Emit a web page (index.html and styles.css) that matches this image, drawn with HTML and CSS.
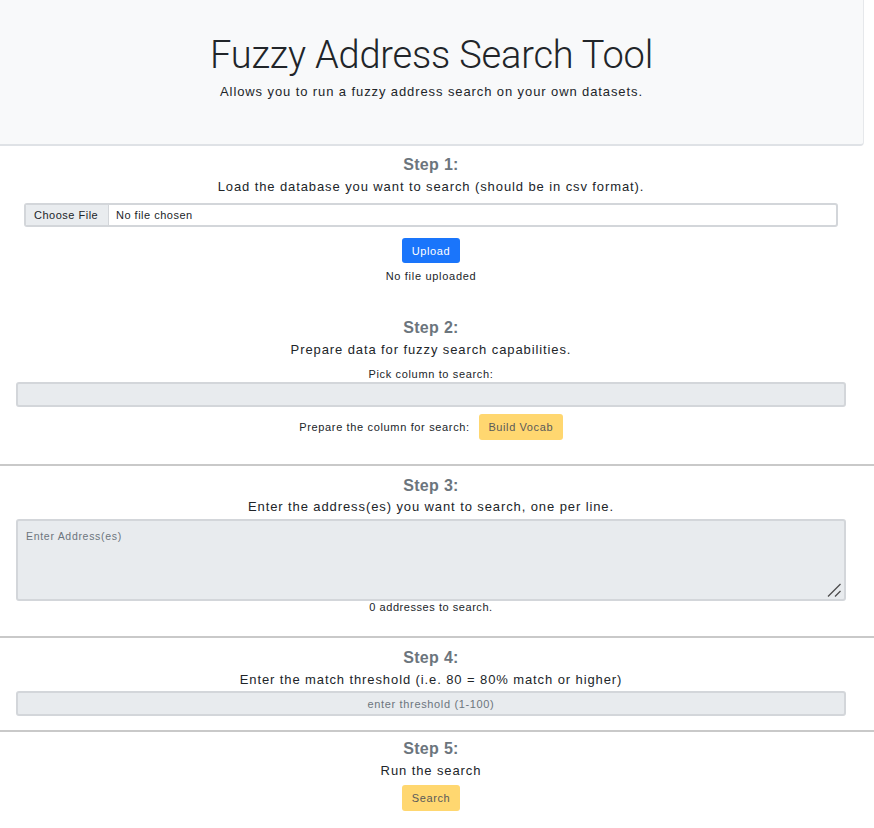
FILE: index.html
```html
<!DOCTYPE html>
<html>
<head>
<meta charset="utf-8">
<link rel="stylesheet" href="styles.css">
</head>
<body>
<header class="jumbotron">
  <h1 class="title">Fuzzy Address Search Tool</h1>
  <p class="lead">Allows you to run a fuzzy address search on your own datasets.</p>
</header>

<section class="step step1">
  <h2 class="step-title">Step 1:</h2>
  <p class="step-desc">Load the database you want to search (should be in csv format).</p>
  <div class="file-input">
    <span class="file-btn">Choose File</span>
    <span class="file-name">No file chosen</span>
  </div>
  <button class="btn btn-primary upload">Upload</button>
  <p class="small-note">No file uploaded</p>
</section>

<section class="step step2">
  <h2 class="step-title">Step 2:</h2>
  <p class="step-desc">Prepare data for fuzzy search capabilities.</p>
  <p class="small-label">Pick column to search:</p>
  <div class="field select-field"></div>
  <div class="vocab-row">
    <span class="small-text">Prepare the column for search:</span>
    <button class="btn btn-warning vocab">Build Vocab</button>
  </div>
</section>

<hr class="divider">

<section class="step step3">
  <h2 class="step-title">Step 3:</h2>
  <p class="step-desc">Enter the address(es) you want to search, one per line.</p>
  <div class="field textarea-field">
    <span class="placeholder">Enter Address(es)</span>
    <svg class="grip" width="14" height="14" viewBox="0 0 14 14">
      <line x1="1" y1="13.5" x2="13.5" y2="1" stroke="#4a4a4a" stroke-width="1.2"/>
      <line x1="8" y1="13.5" x2="13.5" y2="8" stroke="#4a4a4a" stroke-width="1.2"/>
    </svg>
  </div>
  <p class="count-note">0 addresses to search.</p>
</section>

<hr class="divider">

<section class="step step4">
  <h2 class="step-title">Step 4:</h2>
  <p class="step-desc">Enter the match threshold (i.e. 80 = 80% match or higher)</p>
  <div class="field threshold-field"><span class="placeholder">enter threshold (1-100)</span></div>
</section>

<hr class="divider">

<section class="step step5">
  <h2 class="step-title">Step 5:</h2>
  <p class="step-desc">Run the search</p>
  <button class="btn btn-warning search">Search</button>
</section>
</body>
</html>
```
FILE: styles.css
```css
* { box-sizing: border-box; }
body {
  margin: 0;
  font-family: "Liberation Sans", Arial, sans-serif;
  color: #212529;
  background: #fff;
  width: 874px;
}
p, h1, h2 { margin: 0; }

.jumbotron {
  width: 864px;
  height: 146px;
  background: #f8f9fa;
  border-bottom: 2px solid #dfe2e6;
  border-right: 1px solid #e6e8eb;
  border-radius: 0 0 4px 0;
  display: flex;
  flex-direction: column;
  align-items: center;
  padding-top: 32px;
}
.title {
  font-family: Roboto, "Liberation Sans", sans-serif;
  font-weight: 300;
  font-size: 38px;
  line-height: 46px;
  color: #212529;
  letter-spacing: -0.2px;
}
.lead {
  font-size: 13px;
  line-height: 18px;
  margin-top: 5px;
  letter-spacing: 0.9px;
  color: #212529;
}

.step {
  width: 862px;
  display: flex;
  flex-direction: column;
  align-items: center;
}
.step-title {
  font-size: 16px;
  line-height: 20px;
  font-weight: bold;
  color: #6c757d;
  letter-spacing: 0.3px;
}
.step-desc {
  font-size: 13px;
  line-height: 18px;
  margin-top: 3px;
  letter-spacing: 0.9px;
}
.step1 { padding-top: 9px; }
.step2 { padding-top: 35px; }
.step3 { padding-top: 10px; }
.step4 { padding-top: 10px; }
.step5 { padding-top: 7px; }
.step3 .step-desc { margin-top: 2px; }

.file-input {
  margin-top: 7px;
  width: 814px;
  height: 24px;
  border: 2px solid #d3d6da;
  border-radius: 3px;
  display: flex;
  align-items: stretch;
  font-size: 11px;
  letter-spacing: 0.5px;
  overflow: hidden;
  background: #fff;
}
.file-btn {
  background: #e9ecef;
  border-right: 1px solid #d3d6da;
  padding: 0 0 0 8px;
  display: flex;
  align-items: center;
  width: 83px;
}
.file-name {
  display: flex;
  align-items: center;
  padding-left: 7px;
}

.btn {
  border: 0;
  border-radius: 3px;
  font-family: "Liberation Sans", Arial, sans-serif;
  font-size: 11px;
  letter-spacing: 0.6px;
  padding: 0;
  display: flex;
  align-items: center;
  justify-content: center;
}
.btn-primary { background: #1a75fb; color: #fff; }
.btn-warning { background: #ffd770; color: #5a5a5a; }
.upload { width: 58px; height: 25px; margin-top: 11px; }
.small-note {
  font-size: 11px;
  line-height: 14px;
  margin-top: 6px;
  letter-spacing: 0.7px;
}

.small-label {
  font-size: 11px;
  line-height: 14px;
  margin-top: 8px;
  letter-spacing: 0.65px;
}
.field {
  width: 830px;
  background: #e8ebee;
  border: 2px solid #d3d6da;
  border-radius: 3px;
}
.select-field { height: 25px; margin-top: 1px; }
.vocab-row {
  display: flex;
  align-items: center;
  gap: 9px;
  margin-top: 7px;
}
.small-text { font-size: 11px; letter-spacing: 0.65px; }
.vocab { width: 84px; height: 26px; }

.divider {
  margin: 0;
  border: 0;
  width: 874px;
  height: 2px;
  background: #c9c9c9;
}
.step2 + .divider { margin-top: 24px; }
.step3 + .divider { margin-top: 23px; }
.step4 + .divider { margin-top: 14px; }

.textarea-field {
  margin-top: 3px;
  height: 82px;
  position: relative;
  padding: 5px 8px;
}
.placeholder {
  font-size: 11px;
  letter-spacing: 0.5px;
  color: #6c757d;
}
.textarea-field .placeholder { font-size: 10.5px; letter-spacing: 0.7px; }
.grip { position: absolute; right: 3px; bottom: 2px; }
.count-note {
  font-size: 11px;
  line-height: 12px;
  letter-spacing: 0.55px;
  margin-top: 0;
}

.threshold-field {
  margin-top: 2px;
  height: 25px;
  display: flex;
  align-items: center;
  justify-content: center;
}
.threshold-field .placeholder { letter-spacing: 0.65px; }

.search { width: 58px; height: 26px; margin-top: 5px; }
```
